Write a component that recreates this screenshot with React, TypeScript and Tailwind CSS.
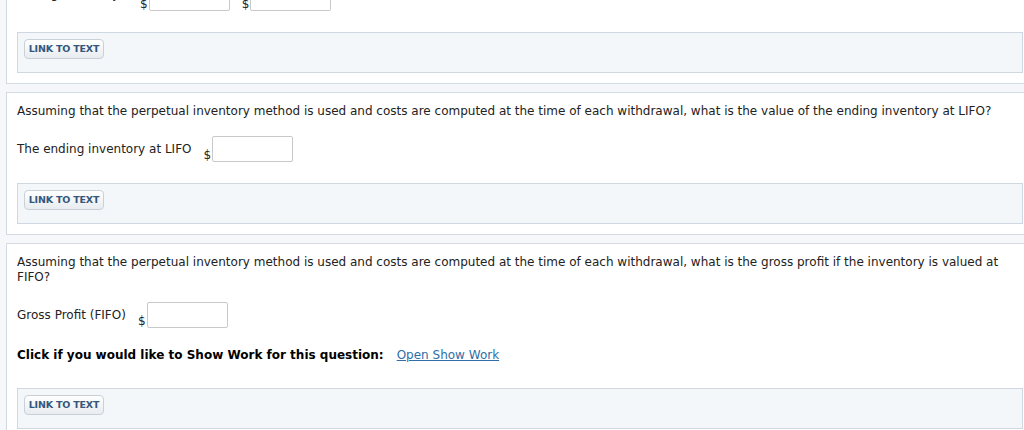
import React from "react";

const font = { fontFamily: "Verdana, 'DejaVu Sans', sans-serif" };

function LinkPanel() {
  return (
    <div className="flex items-start border border-[#cfd7e1] bg-[#f4f7fa] h-[41px] pt-[6px] pl-[6px]">
      <button className="h-[20px] w-[80px] rounded-[4px] border border-[#c9d0d8] bg-gradient-to-b from-[#ffffff] to-[#e8ecf0] text-[9.5px] font-bold text-[#35577d] leading-none tracking-[-0.2px]">
        LINK TO TEXT
      </button>
    </div>
  );
}

function MoneyInput({ w = 81 }: { w?: number }) {
  return (
    <div className="flex items-end">
      <span className="text-[12px] leading-none text-[#222] mr-[1px] mb-[1px]">$</span>
      <div className="h-[26px] border border-[#c9c9c9] rounded-[2px] bg-white" style={{ width: w }} />
    </div>
  );
}

export default function App() {
  return (
    <div className="w-[1024px] h-[430px] overflow-hidden bg-[#f5f7fa] text-[#222]" style={font}>
      <div className="w-[1028px] ml-[6px] mt-[-30px] flex flex-col gap-[8px]">
        {/* Card 1 */}
        <div className="border border-[#d3dae4] bg-white px-[10px] pt-[14px] pb-[10px]">
          <div className="flex items-center h-[26px] text-[12px] leading-[15px]">
            <span className="w-[123px] mb-[7px]">Ending inventory</span>
            <MoneyInput w={81} />
            <span className="w-[12px]" />
            <MoneyInput w={81} />
          </div>
          <div className="mt-[21px]">
            <LinkPanel />
          </div>
        </div>

        {/* Card 2 */}
        <div className="border border-[#d3dae4] bg-white px-[10px] pt-[11px] pb-[10px]">
          <p className="text-[12px] leading-[15px]">
            Assuming that the perpetual inventory method is used and costs are computed at the time of each withdrawal, what is the value of the ending inventory at LIFO?
          </p>
          <div className="mt-[17px] flex items-center h-[26px] text-[12px] leading-[15px]">
            <span className="mr-[12px]">The ending inventory at LIFO</span>
            <MoneyInput w={81} />
          </div>
          <div className="mt-[21px]">
            <LinkPanel />
          </div>
        </div>

        {/* Card 3 */}
        <div className="border border-[#d3dae4] bg-white px-[10px] pt-[11px] pb-[10px]">
          <p className="text-[12px] leading-[15px]">
            Assuming that the perpetual inventory method is used and costs are computed at the time of each withdrawal, what is the gross profit if the inventory is valued at FIFO?
          </p>
          <div className="mt-[17px] flex items-center h-[26px] text-[12px] leading-[15px]">
            <span className="mr-[12px]">Gross Profit (FIFO)</span>
            <MoneyInput w={81} />
          </div>
          <div className="mt-[20px] flex items-center text-[12px] leading-[15px]">
            <span className="font-bold text-black">Click if you would like to Show Work for this question:</span>
            <a href="#" className="ml-[13px] text-[#2f6ea8] underline">Open Show Work</a>
          </div>
          <div className="mt-[25px]">
            <LinkPanel />
          </div>
        </div>
      </div>
    </div>
  );
}
